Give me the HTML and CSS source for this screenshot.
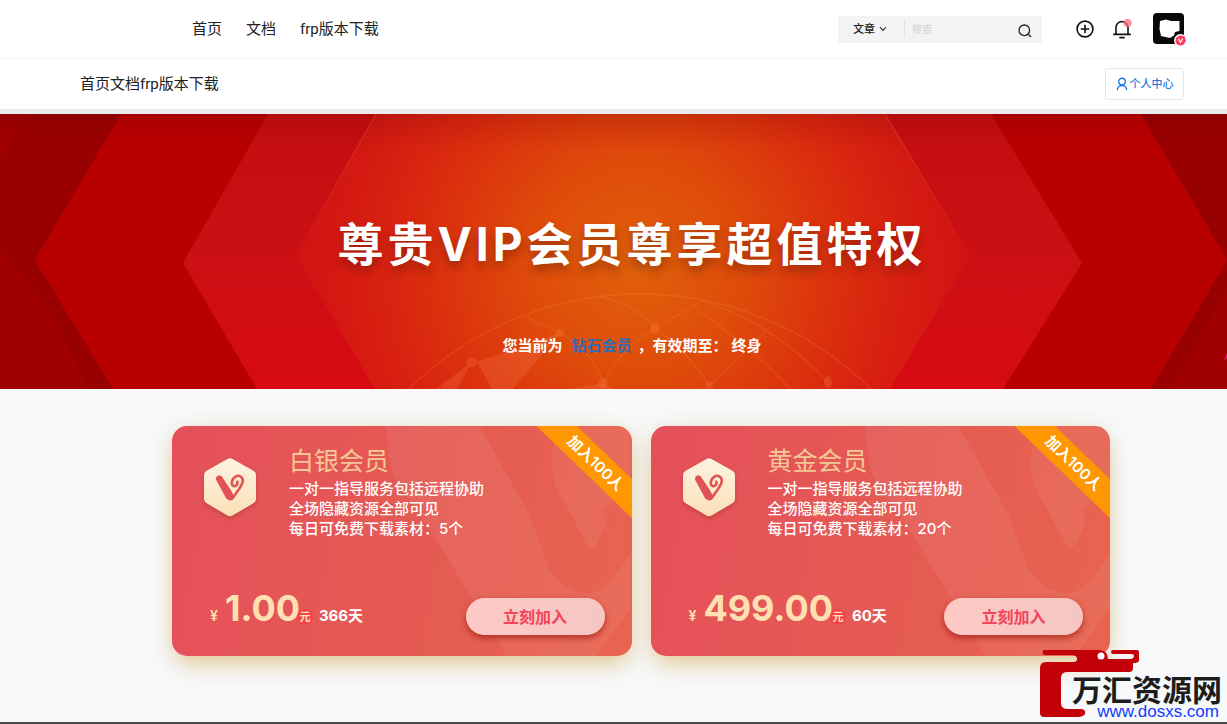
FILE: index.html
```html
<!DOCTYPE html>
<html lang="zh-CN">
<head>
<meta charset="utf-8">
<meta name="viewport" content="width=device-width, initial-scale=1">
<title>尊贵VIP会员尊享超值特权</title>
<link rel="stylesheet" href="styles.css">
</head>
<body>
<svg class="defs" width="0" height="0" aria-hidden="true">
  <defs>
    <linearGradient id="hexFill" x1="0" y1="0" x2="0" y2="1">
      <stop offset="0" stop-color="#fdf3e2"/><stop offset="1" stop-color="#fbdfb8"/>
    </linearGradient>
  </defs>
  <symbol id="vipMark" viewBox="0 0 56 64">
    <path d="M25 3.200Q28 1.400 31 3.200L51 14.500Q54 16.200 54 19.500V42.500Q54 45.800 51 47.500L31 59.300Q28 61 25 59.300L5 47.500Q2 45.800 2 42.500V19.500Q2 16.200 5 14.500Z" fill="url(#hexFill)"/>
    <path d="M14.200 24C12.800 20.400 17.600 17.800 20.300 21.200L28.500 33.500L32.500 41C31 46 26 45 24 42Z" fill="#e05352"/>
    <path d="M27.500 42C29 43.500 31 42.500 32.500 39.500C36 34.500 40.800 29 40.800 24.800C40.800 20.300 36.500 18.700 33.500 20.600C30 22.700 28.700 27.500 30.800 29.600C32.800 31.300 36.300 29 35.300 25.800" fill="none" stroke="#e05352" stroke-width="2.600" stroke-linecap="round"/>
  </symbol>
  <symbol id="cardArt" viewBox="0 0 460 230">
    <path d="M215 0H308L358 89L378 144C393 163 404 167 418 167C436 166 450 142 460 124V181L425 230H335L265 114L222 50Q215 30 215 0Z" fill="#fff" fill-opacity=".06"/>
    <path d="M391 0C376 20 377 55 391 73L416 120Q421 126 426 116L434 100Q437 92 430 85L460 60V0Z" fill="#fff" fill-opacity=".06"/>
  </symbol>
</svg>

<header class="topbar">
  <nav class="topnav" aria-label="主导航">
    <a href="#">首页</a>
    <a href="#">文档</a>
    <a href="#">frp版本下载</a>
  </nav>
  <div class="tools">
    <form class="search">
      <div class="search-type">
        <select aria-label="搜索类型"><option>文章</option></select>
        <svg width="8" height="6" viewBox="0 0 8 6" aria-hidden="true"><path d="M1 1.200L4 4.300L7 1.200" fill="none" stroke="#333" stroke-width="1.200"/></svg>
      </div>
      <input type="text" placeholder="搜索" aria-label="搜索">
      <button type="button" class="plain find" aria-label="搜索">
        <svg width="14" height="14" viewBox="0 0 14 14"><circle cx="6.300" cy="6.300" r="5.300" fill="none" stroke="#222" stroke-width="1.300"/><path d="M10.200 10.200L13 13" stroke="#222" stroke-width="1.300"/></svg>
      </button>
    </form>
    <button type="button" class="plain" aria-label="发布">
      <svg width="18" height="18" viewBox="0 0 18 18"><circle cx="9" cy="9" r="7.900" fill="none" stroke="#111" stroke-width="1.600"/><path d="M9 4.700V13.300M4.700 9H13.300" stroke="#111" stroke-width="1.600"/></svg>
    </button>
    <button type="button" class="plain bell" aria-label="消息">
      <svg width="20" height="20" viewBox="0 0 20 20"><path d="M4 15.200V8.500A6 6 0 0 1 16 8.500V15.200M1.200 15.400H18.800M7.300 18.600H12.700" fill="none" stroke="#111" stroke-width="1.600"/><circle cx="15.600" cy="4" r="4.200" fill="#ff6b81" fill-opacity=".75"/></svg>
    </button>
    <a href="#" class="avatar" aria-label="我的账号">
      <svg width="36" height="36" viewBox="0 0 36 36"><rect width="31" height="31" rx="4" fill="#080808"/><path d="M7 8L13 6.500L18 8L26.500 8V18L22 19L21 22.500L17 25L8 23L6.500 16Z" fill="#fff"/><circle cx="27.500" cy="27.500" r="6.500" fill="#fff"/><path d="M27.500 22.200L29.600 23L31.800 23.600L32.300 25.700L33 27.700L32 29.600L30.800 31.500L28.700 32.300L26.500 32.600L24.500 31.500L22.900 30L22.500 27.700L22.900 25.500L24.100 23.700Z" fill="#f8405c"/><path d="M25.400 25.700L27.500 29.300L29.600 25.700" fill="none" stroke="#fff" stroke-width="1.200"/></svg>
    </a>
  </div>
</header>

<div class="subbar">
  <nav aria-label="次导航"><a href="#">首页</a><a href="#">文档</a><a href="#">frp版本下载</a></nav>
  <a href="#" class="center-link">
    <svg width="12" height="14" viewBox="0 0 12 14" aria-hidden="true"><circle cx="6" cy="4.500" r="3.300" fill="none" stroke="#1f78e0" stroke-width="1.400"/><path d="M1.300 13.300C1.300 6.800 10.700 6.800 10.700 13.300" fill="none" stroke="#1f78e0" stroke-width="1.400"/></svg>
    <span>个人中心</span>
  </a>
</div>

<section class="hero">
  <svg class="hero-art" viewBox="0 0 1227 275" preserveAspectRatio="xMidYMid slice" aria-hidden="true">
    <defs>
      <linearGradient id="band" x1="0" y1="0" x2="0" y2="1"><stop offset="0" stop-color="#c40e10"/><stop offset=".5" stop-color="#cb1013"/><stop offset="1" stop-color="#d80b12"/></linearGradient>
      <radialGradient id="glow" gradientUnits="userSpaceOnUse" cx="636" cy="155" r="345"><stop offset="0" stop-color="#e0600a"/><stop offset=".3" stop-color="#df4c0a"/><stop offset=".65" stop-color="#da290f"/><stop offset="1" stop-color="#d51414" stop-opacity=".6"/></radialGradient>
      <linearGradient id="shade" x1="0" y1="0" x2="0" y2="1"><stop offset="0" stop-color="#600" stop-opacity=".18"/><stop offset="1" stop-color="#800" stop-opacity="0"/></linearGradient>
      <linearGradient id="edge" x1="0" y1="0" x2="0" y2="1"><stop offset="0" stop-color="#f05a35" stop-opacity=".4"/><stop offset="1" stop-color="#f05a35" stop-opacity="0"/></linearGradient>
    </defs>
    <rect width="1227" height="275" fill="#990000"/>
    <path d="M0 0H27L0 48ZM0 135L50 195L88 275H0ZM1227 175L1172 275H1227Z" fill="#a00000"/>
    <path d="M121 0L35 146L113 275H1151L1227 146L1141 0Z" fill="#b90000"/>
    <path d="M268 0L183 149L257 275H1003L1082 149L991 0Z" fill="url(#band)"/>
    <path d="M376 0L296 142L375 275H890L970 142L885 0Z" fill="url(#glow)"/>
    <path d="M376 0L296 142M885 0L970 142" fill="none" stroke="url(#edge)" stroke-width="1.500"/>
    <g fill="none" stroke="#ff9050" stroke-opacity=".2" stroke-width="1.300">
      <circle cx="640" cy="508" r="328"/>
      <path d="M527 203L560 219M600 183Q634 189 655 214L702 187Q770 207 828 268M655 214Q620 235 603 269M655 214Q690 240 709 272L770 213M690 190Q760 240 790 275M560 219Q595 240 603 269"/>
    </g>
    <g fill="#ff8a60" fill-opacity=".22">
      <path d="M560 219L477 248L492 275H513ZM472 248L436 275H457ZM603 269L570 275H612Z"/>
      <ellipse cx="655" cy="214" rx="5" ry="6"/><circle cx="560" cy="219" r="4"/><circle cx="472" cy="248" r="5"/><circle cx="603" cy="269" r="5"/><circle cx="709" cy="271" r="4"/><ellipse cx="828" cy="268" rx="4" ry="6"/>
    </g>
    <rect width="1227" height="36" fill="url(#shade)"/>
    <path d="M1224 247L1227 239V244Z" fill="#ee1c78"/>
  </svg>
  <div class="hero-text">
    <h1>尊贵VIP会员尊享超值特权</h1>
    <p class="status"><span>您当前为</span><span class="level">钻石会员</span><span>，有效期至：</span><span>终身</span></p>
  </div>
</section>

<main class="plans">
  <article class="card">
    <svg class="card-art" aria-hidden="true"><use href="#cardArt"/></svg>
    <div class="ribbon"><span>加入100人</span></div>
    <div class="intro">
      <svg class="mark" width="56" height="64" aria-hidden="true"><use href="#vipMark"/></svg>
      <div>
        <h2>白银会员</h2>
        <ul><li>一对一指导服务包括远程协助</li><li>全场隐藏资源全部可见</li><li>每日可免费下载素材：5个</li></ul>
      </div>
    </div>
    <div class="buy">
      <p class="price"><span class="yen">¥</span><strong>1.00</strong><span class="unit">元</span><span class="days">366天</span></p>
      <button type="button" class="join">立刻加入</button>
    </div>
  </article>
  <article class="card">
    <svg class="card-art" aria-hidden="true"><use href="#cardArt"/></svg>
    <div class="ribbon"><span>加入100人</span></div>
    <div class="intro">
      <svg class="mark" width="56" height="64" aria-hidden="true"><use href="#vipMark"/></svg>
      <div>
        <h2>黄金会员</h2>
        <ul><li>一对一指导服务包括远程协助</li><li>全场隐藏资源全部可见</li><li>每日可免费下载素材：20个</li></ul>
      </div>
    </div>
    <div class="buy">
      <p class="price"><span class="yen">¥</span><strong>499.00</strong><span class="unit">元</span><span class="days">60天</span></p>
      <button type="button" class="join">立刻加入</button>
    </div>
  </article>
</main>
<footer class="footer"></footer>

<a href="#" class="site-mark">
  <svg width="100" height="68" viewBox="0 0 100 68" aria-hidden="true">
    <path d="M3 0H60Q68 1 68 9H90Q94 9 94 6Q94 4 91 4H73Q71 4 71 2Q71 0 73 0H97Q99 0 99 2V11Q98 13 93 13V18Q93 22 89 22H27Q21 22 21 28V53Q21 59 28 59H42Q46 60 45 64Q43 67 38 67H4Q0 67 0 63V18Q0 12 6 12H34Q38 11 37 8Q36 5 32 5H5Q2 5 3 0Z" fill="#c20109"/>
    <circle cx="61" cy="6" r="3.500" fill="#fff"/>
  </svg>
  <span class="site-text"><b>万汇资源网</b><span>www.dosxs.com</span></span>
</a>
</body>
</html>
```
FILE: styles.css
```css
* { box-sizing: border-box; }
body {
  margin: 0;
  min-height: 100vh;
  display: flex;
  flex-direction: column;
  position: relative;
  overflow-x: hidden;
  background: #f7f9fb;
  color: #222;
  font: 15px/20px Inter, "Noto Sans CJK SC", sans-serif;
}
h1, h2, p, ul { margin: 0; padding: 0; }
ul { list-style: none; }
a { color: inherit; text-decoration: none; }
button, input, select { font: inherit; color: inherit; border: 0; background: none; padding: 0; margin: 0; }
svg { display: block; }
.defs { position: absolute; }
.plain { display: block; cursor: pointer; }

.topbar {
  display: flex;
  align-items: center;
  justify-content: space-between;
  height: 59px;
  padding: 0 40px 0 192px;
  background: #fff;
  border-bottom: 1px solid #f5f5f5;
}
.topbar nav, .subbar nav { font-family: Roboto, "Noto Sans CJK SC", sans-serif; }
.topnav { display: flex; gap: 24px; }
.tools { display: flex; align-items: center; }
.tools > .plain { margin-right: 18px; }
.tools > .bell { margin-right: 21px; }
.avatar { width: 34px; height: 32px; }
.avatar svg { overflow: visible; }
.search {
  display: flex;
  align-items: center;
  width: 204px;
  height: 27px;
  margin-right: 34px;
  padding: 0 10px 0 15px;
  border-radius: 3px;
  background: #f3f3f3;
}
.search-type { display: flex; align-items: center; width: 52px; height: 18px; border-right: 1px solid #e2e2e2; }
.search-type select { appearance: none; width: 26px; height: 18px; font-size: 11px; line-height: 18px; font-weight: 500; }
.search input { flex: 1; min-width: 0; padding-left: 7px; font-size: 10px; outline: 0; }
.search input::placeholder { color: #d2d2d2; opacity: 1; }
.find { padding-top: 4px; }

.subbar {
  display: flex;
  align-items: center;
  justify-content: space-between;
  height: 55px;
  padding: 0 43px 0 80px;
  background: #fff;
  border-bottom: 5px solid #e9ecee;
}
.center-link {
  display: flex;
  align-items: center;
  justify-content: center;
  gap: 2px;
  width: 79px;
  height: 32px;
  border: 1px solid #e3e8ee;
  border-radius: 4px;
  color: #1f78e0;
  font-size: 11px;
  font-weight: 500;
}

.hero { position: relative; min-height: 275px; padding: 100px 0 33px 37px; color: #fff; text-align: center; }
.hero-art { position: absolute; inset: 0; width: 100%; height: 100%; }
.hero-text { position: relative; }
.hero h1 {
  font-size: 46px;
  line-height: 60px;
  font-weight: 700;
  letter-spacing: 4px;
  text-shadow: 0 6px 10px rgba(70, 20, 0, .4);
}
.status { display: flex; justify-content: center; margin-top: 62px; font-weight: 700; }
.level { margin: 0 6px 0 9px; color: #2f6cb3; }
.status span:last-child { margin-left: 4px; }

.plans {
  display: grid;
  grid-template-columns: 1fr 1fr;
  gap: 19px;
  padding: 37px 117px 66px 172px;
}
.card {
  position: relative;
  display: flex;
  flex-direction: column;
  justify-content: space-between;
  min-height: 230px;
  padding: 18px 27px 21px 30px;
  border-radius: 15px;
  background: linear-gradient(100deg, #e5505b, #e55b53 55%, #e8644f);
  box-shadow: 0 12px 24px -4px rgba(214, 168, 80, .55), 0 0 18px rgba(225, 200, 150, .3);
}
.card-art { position: absolute; inset: 0; width: 100%; height: 100%; border-radius: 15px; }
.intro, .buy { position: relative; display: flex; }
.intro { gap: 31px; }
.mark { margin-top: 12px; filter: drop-shadow(0 2px 2px rgba(150, 40, 30, .4)); }
.card h2 { font-size: 25px; line-height: 35px; font-weight: 400; color: #f5c897; }
.card li { font-weight: 500; color: #fff; }
.buy { align-items: flex-end; justify-content: space-between; }
.price { display: flex; align-items: baseline; padding-left: 8px; line-height: 38px; color: #ffe0b2; font-weight: 600; }
.yen { margin-right: 7px; font-size: 14px; }
.price strong { font-size: 36px; font-weight: 700; }
.unit {
  width: 16px;
  height: 16px;
  margin-left: -3px;
  border-radius: 50%;
  background: #f4434f;
  font-size: 11px;
  line-height: 16px;
  text-align: center;
}
.days { margin-left: 6px; color: #fff; font-weight: 700; }
.join {
  width: 139px;
  height: 37px;
  border-radius: 19px;
  background: linear-gradient(90deg, #ffc9c5, #f4c7c3);
  box-shadow: 0 3px 6px rgba(150, 20, 10, .65);
  color: #f2455a;
  font-size: 16px;
  font-weight: 700;
  cursor: pointer;
}
/* corner ribbon: a clipped box in the card's top right corner */
.ribbon {
  position: absolute;
  top: 0;
  right: 0;
  width: 96px;
  height: 92px;
  overflow: hidden;
  border-radius: 0 15px 0 0;
}
.ribbon span {
  position: absolute;
  top: 22px;
  left: -22px;
  width: 160px;
  padding-left: 4px;
  background: #ff9800;
  color: #fff;
  font-size: 15px;
  line-height: 28px;
  font-weight: 600;
  text-align: center;
  transform: rotate(44deg);
}

.footer { height: 2px; margin-top: auto; background: #4a4649; }

.site-mark { position: absolute; right: 5px; bottom: 6px; display: flex; width: 182px; }
.site-mark svg { flex: none; }
.site-text { position: absolute; right: 0; bottom: 0; display: flex; flex-direction: column; align-items: flex-end; gap: 4px; white-space: nowrap; }
.site-text b { color: #1d1d1d; font: 700 30px/28px "Noto Sans CJK SC", sans-serif; }
.site-text span { padding-right: 3px; color: #103cff; font: 17px/12px "Liberation Sans", sans-serif; }
```
